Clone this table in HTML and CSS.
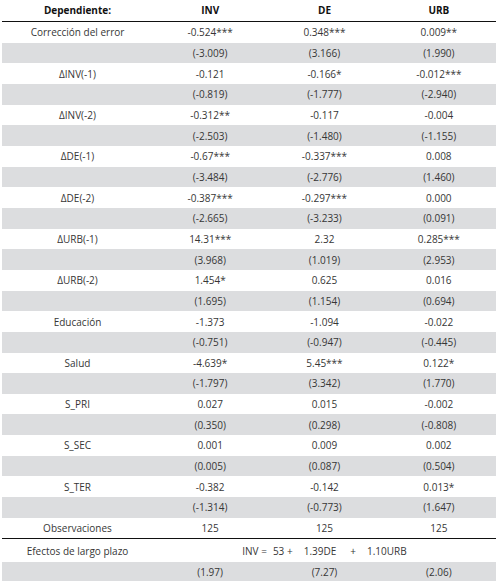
FILE: index.html
```html
<!DOCTYPE html>
<html lang="es">
<head>
<meta charset="utf-8">
<link rel="stylesheet" href="styles.css">
</head>
<body>
<div class="tbl">
  <div class="row head"><div>Dependiente:</div><div>INV</div><div>DE</div><div>URB</div></div>
  <div class="row"><div>Corrección del error</div><div>-0.524***</div><div>0.348***</div><div>0.009**</div></div>
  <div class="row alt"><div></div><div>(-3.009)</div><div>(3.166)</div><div>(1.990)</div></div>
  <div class="row"><div>ΔINV(-1)</div><div>-0.121</div><div>-0.166*</div><div>-0.012***</div></div>
  <div class="row alt"><div></div><div>(-0.819)</div><div>(-1.777)</div><div>(-2.940)</div></div>
  <div class="row"><div>ΔINV(-2)</div><div>-0.312**</div><div>-0.117</div><div>-0.004</div></div>
  <div class="row alt"><div></div><div>(-2.503)</div><div>(-1.480)</div><div>(-1.155)</div></div>
  <div class="row"><div>ΔDE(-1)</div><div>-0.67***</div><div>-0.337***</div><div>0.008</div></div>
  <div class="row alt"><div></div><div>(-3.484)</div><div>(-2.776)</div><div>(1.460)</div></div>
  <div class="row"><div>ΔDE(-2)</div><div>-0.387***</div><div>-0.297***</div><div>0.000</div></div>
  <div class="row alt"><div></div><div>(-2.665)</div><div>(-3.233)</div><div>(0.091)</div></div>
  <div class="row"><div>ΔURB(-1)</div><div>14.31***</div><div>2.32</div><div>0.285***</div></div>
  <div class="row alt"><div></div><div>(3.968)</div><div>(1.019)</div><div>(2.953)</div></div>
  <div class="row"><div>ΔURB(-2)</div><div>1.454*</div><div>0.625</div><div>0.016</div></div>
  <div class="row alt"><div></div><div>(1.695)</div><div>(1.154)</div><div>(0.694)</div></div>
  <div class="row"><div>Educación</div><div>-1.373</div><div>-1.094</div><div>-0.022</div></div>
  <div class="row alt"><div></div><div>(-0.751)</div><div>(-0.947)</div><div>(-0.445)</div></div>
  <div class="row"><div>Salud</div><div>-4.639*</div><div>5.45***</div><div>0.122*</div></div>
  <div class="row alt"><div></div><div>(-1.797)</div><div>(3.342)</div><div>(1.770)</div></div>
  <div class="row"><div>S_PRI</div><div>0.027</div><div>0.015</div><div>-0.002</div></div>
  <div class="row alt"><div></div><div>(0.350)</div><div>(0.298)</div><div>(-0.808)</div></div>
  <div class="row"><div>S_SEC</div><div>0.001</div><div>0.009</div><div>0.002</div></div>
  <div class="row alt"><div></div><div>(0.005)</div><div>(0.087)</div><div>(0.504)</div></div>
  <div class="row"><div>S_TER</div><div>-0.382</div><div>-0.142</div><div>0.013*</div></div>
  <div class="row alt"><div></div><div>(-1.314)</div><div>(-0.773)</div><div>(1.647)</div></div>
  <div class="row obs"><div>Observaciones</div><div>125</div><div>125</div><div>125</div></div>
  <div class="row long"><div>Efectos de largo plazo</div><div class="formula"><span>INV =</span><span class="f2">53 +</span><span class="f3">1.39DE</span><span class="f4">+</span><span class="f5">1.10URB</span></div></div>
  <div class="row alt last"><div></div><div>(1.97)</div><div>(7.27)</div><div>(2.06)</div></div>
</div>
</body>
</html>
```
FILE: styles.css
```css
html, body {
  margin: 0;
  padding: 0;
  background: #ffffff;
}
body {
  font-family: "Open Sans", "DejaVu Sans", sans-serif;
  font-size: 10px;
  color: #363636;
}
.tbl {
  margin-left: 2px;
  width: 494px;
}
.row {
  display: grid;
  grid-template-columns: 151px 1fr 1fr 1fr;
  height: 20.66px;
  align-items: center;
  text-align: center;
  line-height: 1;
}
.row.alt {
  background: #dcdddf;
}
.row.head {
  border-bottom: 1px solid #111;
  font-weight: 700;
  color: #111;
  box-sizing: border-box;
  height: 22px;
  padding-bottom: 1px;
}
.row.obs {
  border-bottom: 1px solid #111;
  box-sizing: border-box;
  height: 21.5px;
}
.row.long {
  height: 23px;
}
.row.last {
  height: 19px;
}
.formula {
  grid-column: 2 / 5;
  display: flex;
  justify-content: center;
}
.formula .f2 {
  margin-left: 6px;
}
.formula .f3 {
  margin-left: 11px;
}
.formula .f4 {
  margin-left: 14px;
}
.formula .f5 {
  margin-left: 11px;
}
```
